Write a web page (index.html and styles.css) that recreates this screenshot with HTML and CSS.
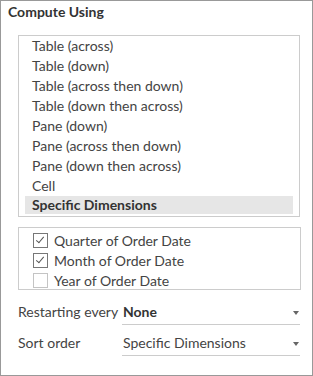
FILE: index.html
```html
<!DOCTYPE html>
<html lang="en">
<head>
    <meta charset="UTF-8">
    <title>Compute Using</title>
    <link rel="stylesheet" href="styles.css">
</head>
<body>
    <div class="panel">
        <h2 class="title">Compute Using</h2>

        <ul class="list">
            <li>Table (across)</li>
            <li>Table (down)</li>
            <li>Table (across then down)</li>
            <li>Table (down then across)</li>
            <li>Pane (down)</li>
            <li>Pane (across then down)</li>
            <li>Pane (down then across)</li>
            <li>Cell</li>
            <li class="selected">Specific Dimensions</li>
        </ul>

        <div class="dims">
            <label class="dim"><span class="box checked"></span>Quarter of Order Date</label>
            <label class="dim"><span class="box checked"></span>Month of Order Date</label>
            <label class="dim"><span class="box"></span>Year of Order Date</label>
        </div>

        <div class="field">
            <span class="field-label">Restarting every</span>
            <div class="select bold">None<span class="arrow"></span></div>
        </div>
        <div class="field second">
            <span class="field-label">Sort order</span>
            <div class="select">Specific Dimensions<span class="arrow"></span></div>
        </div>
    </div>
</body>
</html>
```

FILE: styles.css
```css
html, body {
    margin: 0;
    padding: 0;
}
body {
    font-family: Lato, "Open Sans", sans-serif;
    font-size: 14px;
    color: #444;
}
.panel {
    width: 311px;
    height: 374px;
    border: 1px solid #999;
    background: #fff;
}
.title {
    margin: 0;
    padding: 3px 0 0 7px;
    font-size: 14px;
    font-weight: bold;
    line-height: 16px;
    color: #333;
}
.list {
    list-style: none;
    margin: 15px 0 0 17px;
    padding: 0 6px;
    width: 268px;
    height: 180px;
    border: 1px solid #ccc;
}
.list li {
    height: 20px;
    line-height: 20px;
    padding-left: 7px;
}
.list li.selected {
    font-weight: bold;
    color: #333;
    background: #e6e6e6;
    height: 18px;
    line-height: 18px;
}
.dims {
    margin: 10px 0 0 17px;
    width: 281px;
    height: 59px;
    border: 1px solid #ccc;
    padding-top: 2px;
}
.dim {
    display: flex;
    align-items: center;
    height: 20px;
    padding-left: 14px;
}
.box {
    width: 13px;
    height: 13px;
    border: 1px solid #c4c4c4;
    margin-right: 6px;
    position: relative;
}
.box.checked {
    border-color: #777;
}
.box.checked::after {
    content: "";
    position: absolute;
    left: 4px;
    top: 1px;
    width: 3px;
    height: 7px;
    border: solid #555;
    border-width: 0 1.5px 1.5px 0;
    transform: rotate(40deg);
}
.field {
    display: flex;
    margin: 10px 0 0 17px;
}
.field.second {
    margin-top: 6px;
}
.field-label {
    width: 104px;
    line-height: 24px;
}
.select {
    flex: none;
    width: 178px;
    height: 25px;
    line-height: 24px;
    border-bottom: 1px solid #ccc;
    position: relative;
    padding-left: 1px;
    box-sizing: border-box;
}
.select.bold {
    font-weight: bold;
    color: #333;
}
.arrow {
    position: absolute;
    right: 1px;
    top: 11px;
    border-left: 3.5px solid transparent;
    border-right: 3.5px solid transparent;
    border-top: 4px solid #666;
}
```
